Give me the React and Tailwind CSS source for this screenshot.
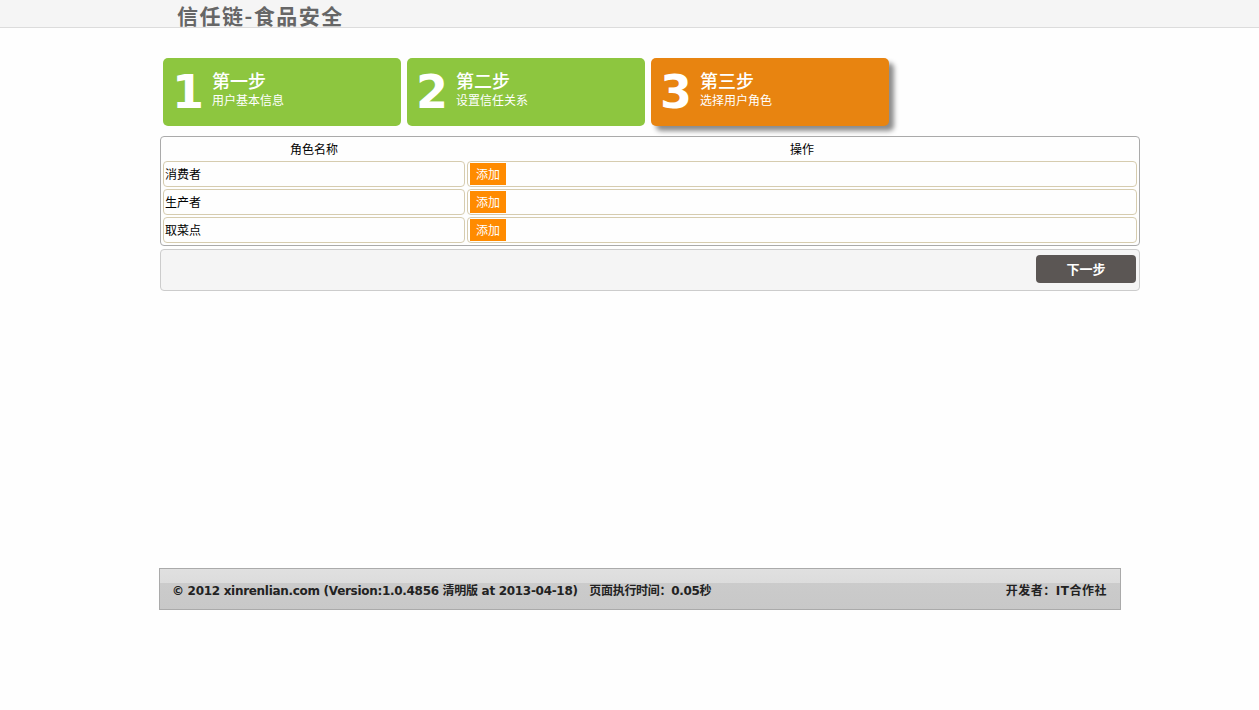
import React from "react";

const cjk = { fontFamily: '"Noto Sans CJK SC", "Noto Sans", sans-serif' };
const num = { fontFamily: '"DejaVu Sans", Verdana, sans-serif' };
const stepText = { fontFamily: '"DejaVu Sans", "Noto Sans CJK SC", sans-serif' };

function StepCard({ n, title, sub, color, active }) {
  return (
    <div
      className={`flex h-[68px] w-[238px] items-center rounded-[5px] pl-[9px] ${color} ${
        active ? "shadow-[5px_5px_5px_rgba(0,0,0,0.45)]" : ""
      }`}
    >
      <span className="text-[46px] font-bold leading-none text-white" style={num}>
        {n}
      </span>
      <div className="ml-[8px] flex flex-col gap-[2px] pb-[5px]" style={stepText}>
        <div className="text-[18px] leading-[20px] text-white font-medium">{title}</div>
        <div className="text-[12px] leading-[14px] text-white">{sub}</div>
      </div>
    </div>
  );
}

function Row({ name }) {
  return (
    <div className="flex gap-[2px]">
      <div className="flex h-[26px] w-[302px] items-center rounded-[4px] border border-[#d6ccaf] pl-[1px] text-[12px] text-black">
        {name}
      </div>
      <div className="flex h-[26px] w-[670px] items-center rounded-[4px] border border-[#d6ccaf] pl-[2px]">
        <span className="flex h-[22px] w-[36px] items-center justify-center bg-[#ff8b00] text-[12px] text-white">
          添加
        </span>
      </div>
    </div>
  );
}

export default function App() {
  return (
    <div className="min-h-[710px] w-[1259px] bg-[#fefefe]" style={cjk}>
      <div className="h-[28px] border-b border-[#dcdcdc] bg-[#f5f5f5] pl-[177px]">
        <span className="text-[21px] font-bold leading-[30px] tracking-[1.5px] text-[#666]">信任链-食品安全</span>
      </div>

      <div className="ml-[160px] w-[980px]">
        <div className="mt-[30px] flex gap-[6px] pl-[3px]">
          <StepCard n="1" title="第一步" sub="用户基本信息" color="bg-[#8dc63f]" />
          <StepCard n="2" title="第二步" sub="设置信任关系" color="bg-[#8dc63f]" />
          <StepCard n="3" title="第三步" sub="选择用户角色" color="bg-[#e88410]" active />
        </div>

        <div className="mt-[10px] flex flex-col gap-[2px] rounded-[4px] border border-[#aaaaaa] p-[2px]">
          <div className="flex h-[20px] gap-[2px] text-[12px] text-black">
            <div className="flex w-[302px] items-center justify-center">角色名称</div>
            <div className="flex w-[670px] items-center justify-center">操作</div>
          </div>
          <Row name="消费者" />
          <Row name="生产者" />
          <Row name="取菜点" />
        </div>

        <div className="mt-[3px] flex h-[42px] items-start justify-end rounded-[4px] border border-[#cccccc] bg-[#f5f5f5] pr-[3px] pt-[5px]">
          <button className="flex h-[28px] w-[100px] items-center justify-center rounded-[4px] bg-[#5b5654] text-[13px] font-bold text-white">
            下一步
          </button>
        </div>
      </div>

      <div
        className="ml-[159px] mt-[277px] flex h-[42px] w-[962px] items-center justify-between border border-[#aaaaaa] bg-[linear-gradient(to_bottom,#e0e0e0_0%,#dcdcdc_35%,#cbcbcb_36%,#c8c8c8_100%)] pl-[12px] pr-[13px] pt-[3px] text-[12px] font-bold text-[#222]"
        style={{ fontFamily: '"DejaVu Sans", "Noto Sans CJK SC", sans-serif' }}
      >
        <span className="tracking-[-0.3px]">
          © 2012 xinrenlian.com (Version:1.0.4856 清明版 at 2013-04-18)&nbsp;&nbsp; 页面执行时间：0.05秒
        </span>
        <span className="tracking-[0.5px]">开发者：IT合作社</span>
      </div>
    </div>
  );
}
